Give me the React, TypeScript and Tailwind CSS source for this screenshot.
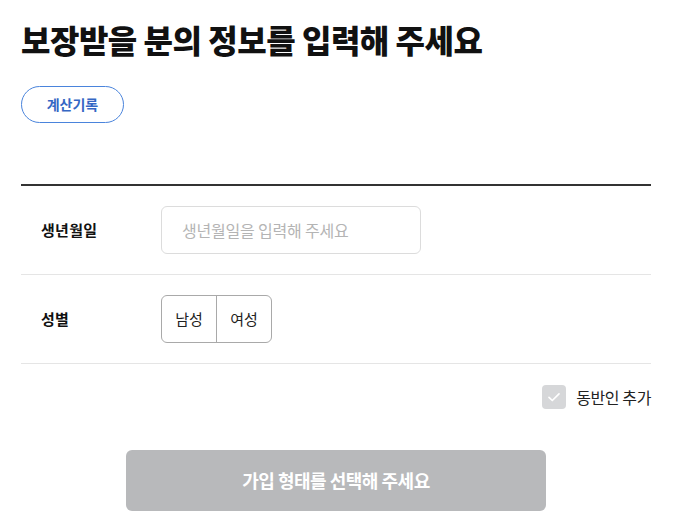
import React, { useState } from 'react';

const font = { fontFamily: '"Noto Sans CJK KR", "Noto Sans", sans-serif' };

const App: React.FC = () => {
    const [gender, setGender] = useState<string | null>(null);
    const [companion, setCompanion] = useState(false);

    return (
        <div className="bg-white min-h-screen px-[21px] pt-[15px] text-[#111]" style={font}>
            <div className="w-[630px]">
                {/* Title */}
                <h1 className="text-[32px] leading-[48px] font-extrabold tracking-[-0.5px]">
                    보장받을 분의 정보를 입력해 주세요
                </h1>

                {/* History button */}
                <button className="mt-[23px] h-[37px] w-[103px] rounded-full border border-[#4a84dc] text-[14px] font-bold text-[#3567c4] flex items-center justify-center">
                    계산기록
                </button>

                {/* Form */}
                <div className="mt-[61px] border-t-2 border-[#333]">
                    <div className="flex items-center border-b border-[#e5e5e5] py-[20px]">
                        <div className="w-[140px] pl-[20px] text-[15px] font-bold tracking-[0.3px]">생년월일</div>
                        <div className="h-[48px] w-[260px] rounded-[6px] border border-[#dcdcdc] flex items-center pl-[20px] text-[16px] tracking-[-0.2px] text-[#b4b4b4]">
                            생년월일을 입력해 주세요
                        </div>
                    </div>
                    <div className="flex items-center border-b border-[#e5e5e5] py-[20px]">
                        <div className="w-[140px] pl-[20px] text-[15px] font-bold tracking-[0.3px]">성별</div>
                        <div className="h-[48px] flex rounded-[6px] border border-[#a9a9a9] overflow-hidden text-[15px] text-[#222]">
                            <button
                                onClick={() => setGender('m')}
                                className={`w-[55px] flex items-center justify-center border-r border-[#a9a9a9] ${gender === 'm' ? 'bg-[#f3f6fc]' : ''}`}
                            >
                                남성
                            </button>
                            <button
                                onClick={() => setGender('f')}
                                className={`w-[54px] flex items-center justify-center ${gender === 'f' ? 'bg-[#f3f6fc]' : ''}`}
                            >
                                여성
                            </button>
                        </div>
                    </div>
                </div>

                {/* Companion */}
                <div className="mt-[21px] flex justify-end">
                    <label className="flex items-center gap-[10px] cursor-pointer" onClick={() => setCompanion(!companion)}>
                        <span className="h-[24px] w-[24px] rounded-[4px] bg-[#d6d7d9] flex items-center justify-center">
                            <svg width="16" height="16" viewBox="0 0 16 16" fill="none">
                                <path d="M3 8.3l3.3 3.2L13 4.8" stroke="#fff" strokeWidth="1.7" strokeLinecap="round" strokeLinejoin="round" />
                            </svg>
                        </span>
                        <span className="text-[16px] tracking-[-0.4px] text-[#222]">동반인 추가</span>
                    </label>
                </div>

                {/* Submit */}
                <div className="mt-[41px] flex justify-center">
                    <button className="h-[61px] w-[420px] rounded-[6px] bg-[#b8b9bb] text-white text-[18px] font-bold tracking-[-0.5px]">
                        가입 형태를 선택해 주세요
                    </button>
                </div>
            </div>
        </div>
    );
};

export default App;
